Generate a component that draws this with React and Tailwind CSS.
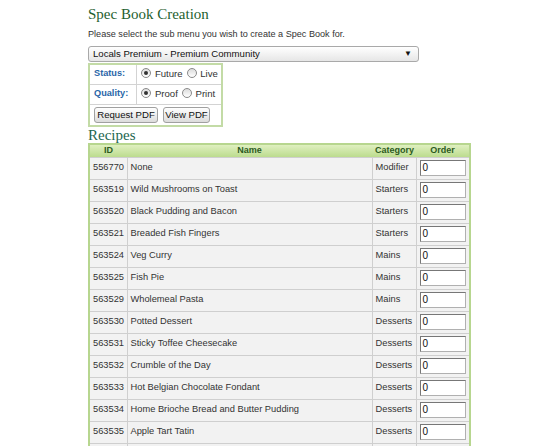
import React from "react";

const rows = [
  ["556770", "None", "Modifier"],
  ["563519", "Wild Mushrooms on Toast", "Starters"],
  ["563520", "Black Pudding and Bacon", "Starters"],
  ["563521", "Breaded Fish Fingers", "Starters"],
  ["563524", "Veg Curry", "Mains"],
  ["563525", "Fish Pie", "Mains"],
  ["563529", "Wholemeal Pasta", "Mains"],
  ["563530", "Potted Dessert", "Desserts"],
  ["563531", "Sticky Toffee Cheesecake", "Desserts"],
  ["563532", "Crumble of the Day", "Desserts"],
  ["563533", "Hot Belgian Chocolate Fondant", "Desserts"],
  ["563534", "Home Brioche Bread and Butter Pudding", "Desserts"],
  ["563535", "Apple Tart Tatin", "Desserts"],
  ["563536", "Fresh Fruit Salad", "Desserts"],
];

function Radio({ checked }) {
  return (
    <span className="inline-block w-[10px] h-[10px] rounded-full border border-[#8a8a8a] bg-gradient-to-b from-[#dcdcdc] to-[#ffffff] relative align-[-1px]">
      {checked && (
        <span className="absolute left-[2px] top-[2px] w-[4px] h-[4px] rounded-full bg-[#333]" />
      )}
    </span>
  );
}

export default function App() {
  return (
    <div className="w-[550px] h-[446px] overflow-hidden bg-white font-['Liberation_Sans',Arial,sans-serif] text-[#333]">
      <div className="pl-[88px] pt-[5px]">
        <h1 className="font-['Liberation_Serif','Times_New_Roman',serif] text-[15px] leading-[18px] text-[#1f5f2f]">
          Spec Book Creation
        </h1>
        <p className="mt-[5px] text-[9.1px] leading-[12px] text-[#333]">
          Please select the sub menu you wish to create a Spec Book for.
        </p>
        <div className="mt-[6px] w-[331px] h-[16px] border border-[#a9a9a9] rounded-[3px] bg-gradient-to-b from-[#ffffff] to-[#e6e6e6] flex items-center justify-between px-[4px] text-[9.6px] text-[#111]">
          <span>Locals Premium - Premium Community</span>
          <span className="text-[8px] mr-[2px]">▼</span>
        </div>
        <table className="mt-[1px] border-[2px] border-[#c3dba6] border-collapse text-[9.6px]">
          <tbody>
            <tr className="h-[20px]">
              <td className="border border-[#d3d3d3] pl-[4px] pr-[8px] text-[9.2px] font-bold text-[#2a66a8] w-[45px]">Status:</td>
              <td className="border border-[#d3d3d3] pl-[4px] pr-[3px] text-[#333] whitespace-nowrap">
                <Radio checked /> <span className="ml-[1px] mr-[4px]">Future</span>
                <Radio /> <span className="ml-[1px]">Live</span>
              </td>
            </tr>
            <tr className="h-[20px]">
              <td className="border border-[#d3d3d3] pl-[4px] pr-[8px] text-[9.2px] font-bold text-[#2a66a8]">Quality:</td>
              <td className="border border-[#d3d3d3] pl-[4px] pr-[3px] text-[#333] whitespace-nowrap">
                <Radio checked /> <span className="ml-[1px] mr-[4px]">Proof</span>
                <Radio /> <span className="ml-[1px]">Print</span>
              </td>
            </tr>
            <tr className="h-[22px]">
              <td colSpan={2} className="px-[4px] py-[2px]">
                <div className="flex gap-[5px]">
                  <button className="h-[16px] w-[64px] border border-[#a0a0a0] rounded-[3px] bg-gradient-to-b from-[#ffffff] to-[#dcdcdc] text-[9.6px] text-[#111] leading-[14px]">
                    Request PDF
                  </button>
                  <button className="h-[16px] w-[47px] border border-[#a0a0a0] rounded-[3px] bg-gradient-to-b from-[#ffffff] to-[#dcdcdc] text-[9.6px] text-[#111] leading-[14px]">
                    View PDF
                  </button>
                </div>
              </td>
            </tr>
          </tbody>
        </table>
        <h2 className="font-['Liberation_Serif','Times_New_Roman',serif] text-[15px] leading-[16px] text-[#1d6650]">
          Recipes
        </h2>
        <table className="w-[383px] border-[2px] border-[#b7d68f] border-collapse text-[9.3px] text-[#333]">
          <thead>
            <tr className="h-[13px] bg-gradient-to-b from-[#e2f1c4] to-[#bcdc8e]">
              <th className="w-[38px] text-[9px] leading-[11px] font-bold text-[#2c5a1e] text-left pl-[14px]">ID</th>
              <th className="text-[9px] leading-[11px] font-bold text-[#2c5a1e] text-center">Name</th>
              <th className="w-[44px] text-[9px] leading-[11px] font-bold text-[#2c5a1e] text-left pl-[3px]">Category</th>
              <th className="w-[54px] text-[9px] leading-[11px] font-bold text-[#2c5a1e] text-center">Order</th>
            </tr>
          </thead>
          <tbody>
            {rows.map((r) => (
              <tr key={r[0]} className="h-[22px] bg-[#f2f2f2]">
                <td className="border border-[#cfcfcf] pl-[3px]">{r[0]}</td>
                <td className="border border-[#cfcfcf] pl-[3px]">{r[1]}</td>
                <td className="border border-[#cfcfcf] pl-[3px]">{r[2]}</td>
                <td className="border border-[#cfcfcf] pl-[3px]">
                  <div className="w-[46px] h-[16px] bg-white border border-[#b0b0b0] border-t-[#777] border-l-[#777] text-[10px] leading-[14px] pl-[2px] text-[#111]">
                    0
                  </div>
                </td>
              </tr>
            ))}
          </tbody>
        </table>
      </div>
    </div>
  );
}
